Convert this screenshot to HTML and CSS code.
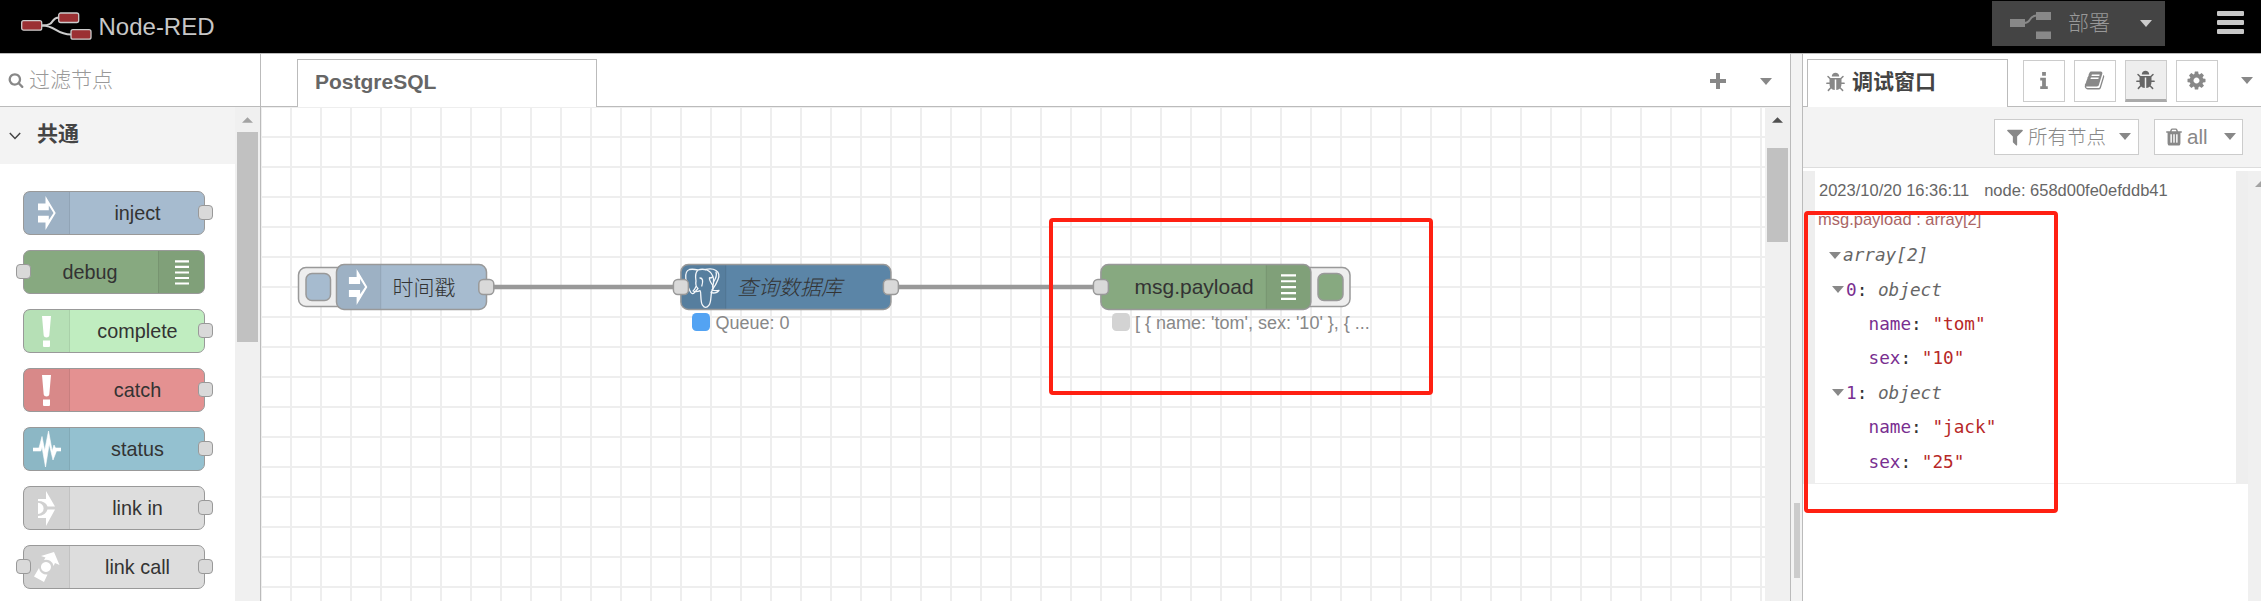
FILE: index.html
```
<!DOCTYPE html>
<html lang="zh-CN">
<head>
<meta charset="utf-8">
<title>Node-RED</title>
<link rel="stylesheet" href="styles.css">
</head>
<body>
<svg class="defs" width="0" height="0">
  <symbol id="i-bug" viewBox="0 0 1792 1792"><path d="M1696 960q0 26-19 45t-45 19h-224q0 171-67 290l208 209q19 19 19 45t-19 45q-18 19-45 19t-45-19l-198-197q-5 5-15 13t-42 28.500-65 36.500-82 29-97 13v-896h-128v896q-51 0-101.500-13.500t-87-33-66-39-43.500-32.500l-15-14-183 207q-20 21-48 21-24 0-43-16-19-18-20.500-44.500t15.500-46.500l202-227q-58-114-58-274h-224q-26 0-45-19t-19-45 19-45 45-19h224v-294l-173-173q-19-19-19-45t19-45 45-19 45 19l173 173h844l173-173q19-19 45-19t45 19 19 45-19 45l-173 173v294h224q26 0 45 19t19 45zm-480-576h-640q0-133 93.500-226.500t226.500-93.500 226.500 93.500 93.500 226.500z"/></symbol>
  <symbol id="i-cog" viewBox="0 0 1792 1792"><path d="M1152 896q0-106-75-181t-181-75-181 75-75 181 75 181 181 75 181-75 75-181zm512-109v222q0 12-8 23t-20 13l-185 28q-19 54-39 91 35 50 107 138 10 12 10 25t-9 23q-27 37-99 108t-94 71q-12 0-26-9l-138-108q-44 23-91 38-16 136-29 186-7 28-36 28h-222q-14 0-24.500-8.500t-11.500-21.500l-28-184q-49-16-90-37l-141 107q-10 9-25 9-14 0-25-11-126-114-165-168-7-10-7-23 0-12 8-23 15-21 51-66.500t54-70.500q-27-50-41-99l-183-27q-13-2-21-12.500t-8-23.500v-222q0-12 8-23t19-13l186-28q14-46 39-92-40-57-107-138-10-12-10-24 0-10 9-23 26-36 98.500-107.500t94.500-71.500q13 0 26 10l138 107q44-23 91-38 16-136 29-186 7-28 36-28h222q14 0 24.500 8.500t11.500 21.500l28 184q49 16 90 37l142-107q9-9 24-9 13 0 25 10 129 119 165 170 7 8 7 22 0 12-8 23-15 21-51 66.500t-54 70.500q26 50 41 98l183 28q13 2 21 12.500t8 23.500z"/></symbol>
  <symbol id="i-search" viewBox="0 0 1792 1792"><path d="M1216 832q0-185-131.500-316.500t-316.500-131.500-316.500 131.500-131.500 316.500 131.500 316.500 316.500 131.500 316.500-131.500 131.500-316.500zm512 832q0 52-38 90t-90 38q-54 0-90-38l-343-342q-179 124-399 124-143 0-273.500-55.500t-225-150-150-225-55.500-273.500 55.500-273.500 150-225 225-150 273.500-55.500 273.500 55.500 225 150 150 225 55.500 273.500q0 220-124 399l343 343q37 37 37 90z"/></symbol>
  <symbol id="i-trash" viewBox="0 0 1792 1792"><path d="M704 1376v-704q0-14-9-23t-23-9h-64q-14 0-23 9t-9 23v704q0 14 9 23t23 9h64q14 0 23-9t9-23zm256 0v-704q0-14-9-23t-23-9h-64q-14 0-23 9t-9 23v704q0 14 9 23t23 9h64q14 0 23-9t9-23zm256 0v-704q0-14-9-23t-23-9h-64q-14 0-23 9t-9 23v704q0 14 9 23t23 9h64q14 0 23-9t9-23zm-544-992h448l-48-117q-7-9-17-11h-317q-10 2-17 11zm928 32v64q0 14-9 23t-23 9h-96v948q0 83-47 143.500t-113 60.500h-832q-66 0-113-58.500t-47-141.500v-952h-96q-14 0-23-9t-9-23v-64q0-14 9-23t23-9h309l70-167q15-37 54-63t79-26h320q40 0 79 26t54 63l70 167h309q14 0 23 9t9 23z"/></symbol>
  <symbol id="i-filter" viewBox="0 0 1792 1792"><path d="M1595 295q17 41-14 70l-493 493v742q0 42-39 59-13 5-25 5-27 0-45-19l-256-256q-19-19-19-45v-486l-493-493q-31-29-14-70 17-39 59-39h1280q42 0 59 39z"/></symbol>
  <symbol id="i-book" viewBox="0 0 1792 1792"><path d="M1703 478q40 57 18 129l-275 906q-19 64-76.500 107.500t-122.500 43.500h-923q-77 0-148.500-53.500t-99.500-131.500q-24-67-2-127 0-4 3-27t4-37q1-8-3-21.500t-3-19.500q2-11 8-21t16.500-23.500 16.500-23.500q23-38 45-91.500t30-91.500q3-10 .5-30t-.5-28q3-11 17-28t17-23q21-36 42-92t25-90q1-9-2.500-32t.5-28q4-13 22-30.500t22-22.500q19-26 42.500-84.500t27.500-96.500q1-8-3-25.500t-2-26.500q2-8 9-18t18-23 17-21q8-12 16.500-30.500t15-35 16-36 19.500-32 26.500-23.500 36-11.500 47.500 5.500l-1 3q38-9 51-9h761q74 0 114 56t18 130l-274 906q-36 119-71.500 153.500t-128.500 34.500h-869q-27 0-38 15-11 16-1 43 24 70 144 70h923q29 0 56-15.500t35-41.500l300-987q7-22 5-57 38 15 59 43zm-1064 2q-4 13 2 22.500t20 9.500h608q13 0 25.500-9.500t16.500-22.500l21-64q4-13-2-22.500t-20-9.500h-608q-13 0-25.500 9.500t-16.500 22.500zm-83 256q-4 13 2 22.500t20 9.500h608q13 0 25.500-9.500t16.500-22.500l21-64q4-13-2-22.500t-20-9.500h-608q-13 0-25.500 9.500t-16.500 22.500z"/></symbol>
  <symbol id="i-info" viewBox="0 0 8 18"><path d="M2 0h4v4H2zM0 6h6v9h2v3H0v-3h2V9H0z"/></symbol>
  <symbol id="i-caret" viewBox="0 0 12 7"><path d="M0 0h12L6 7z"/></symbol>
  <symbol id="i-up" viewBox="0 0 12 6"><path d="M0 6h12L6 0z"/></symbol>
  <symbol id="i-inject" viewBox="0 0 18 34"><path d="M0 7.500H7.500V0L17.700 17 7.500 34V26.500H0V19.800H10.800V24L15.500 17 10.800 9.500V14.200H0z"/></symbol>
  <symbol id="i-bang" viewBox="0 0 9 31"><path d="M0 0h9L7.300 19.500Q7 21.500 4.500 21.500T1.700 19.500zM1 24.500h7v5.500q0 1-1 1H2q-1 0-1-1z"/></symbol>
  <symbol id="i-list" viewBox="0 0 15 26"><path d="M0 0h15v2.200H0zM0 5.900h15v2.200H0zM0 11.800h15V14H0zM0 17.700h15v2.200H0zM0 23.600h15v2.200H0z"/></symbol>
  <symbol id="i-status" viewBox="0 0 28 36"><path d="M0 17h6l3-11.500 2.700 14L15.500 0l3.700 20 1.800-6 1.500 3H28v3h-4.500L20 29l-3.800-16L12.500 36 9 16l-1.200 4H0z" stroke="#fff" stroke-width=".6"/></symbol>
  <symbol id="i-linkin" viewBox="0 0 18 35"><path d="M0 8h8V0l9 15.500H9.500Q7.500 10 0 10zM0 11.800a5.600 5.600 0 0 1 0 11.200zM0 25Q7.500 25 9.500 18.500H17L8 35v-8H0z"/></symbol>
  <symbol id="i-linkcall" viewBox="0 0 26 30"><path d="M7 4 20 0l5.500 13-4.500-2-1.500 3A7.500 7.500 0 0 0 10 8l1.500-2.500zM12 10a5 5 0 1 1-.1 0zM5 16A7.500 7.500 0 0 0 13.500 22.500L10 30 0 24.500z"/></symbol>
</svg>

<header class="header">
  <svg class="logo" width="72" height="30" viewBox="0 0 72 30">
    <g fill="none" stroke="#ccc" stroke-width="2"><path d="M21 14.500c14 0 8-8 17-8"/><path d="M21 14.500c14 0 14 9 29 9"/></g>
    <g fill="#9b3033" stroke="#ccc" stroke-width="1.300"><rect x=".7" y="9.700" width="20" height="9.500" rx="2"/><rect x="37.700" y="2" width="20" height="9.500" rx="2"/><rect x="50" y="18.700" width="20" height="9.500" rx="2"/></g>
  </svg>
  <span class="brand">Node-RED</span>
  <div class="deploy">
    <svg width="42" height="28" viewBox="0 0 42 28"><path d="M0 8h15v8H0zM26 1h15v8H26zM26 20.500h15v8H26z" fill="#888"/><path d="M14 12q4 0 6-3.500t6-4" stroke="#888" stroke-width="2" fill="none"/></svg>
    <span class="deploy-text">部署</span>
    <svg class="caret deploy-caret"><use href="#i-caret"/></svg>
  </div>
  <div class="burger"><i></i><i></i><i></i></div>
</header>

<div class="main">
  <aside class="palette">
    <div class="search"><svg width="16" height="16"><use href="#i-search"/></svg><span>过滤节点</span></div>
    <div class="palette-body">
      <div class="palette-list">
        <div class="category"><svg width="12" height="8" viewBox="0 0 12 8"><path d="M.8 1 6 6.500 11.200 1" fill="none" stroke="#444" stroke-width="1.500"/></svg><b>共通</b></div>
        <div class="nodes">
          <div class="pnode inject"><span class="pic"><svg width="18" height="34"><use href="#i-inject"/></svg></span><span class="lbl">inject</span><i class="port out"></i></div>
          <div class="pnode debug"><i class="port in"></i><span class="lbl">debug</span><span class="pic"><svg width="14" height="25"><use href="#i-list"/></svg></span></div>
          <div class="pnode complete"><span class="pic"><svg width="9" height="31"><use href="#i-bang"/></svg></span><span class="lbl">complete</span><i class="port out"></i></div>
          <div class="pnode catch"><span class="pic"><svg width="9" height="31"><use href="#i-bang"/></svg></span><span class="lbl">catch</span><i class="port out"></i></div>
          <div class="pnode status"><span class="pic"><svg width="28" height="36"><use href="#i-status"/></svg></span><span class="lbl">status</span><i class="port out"></i></div>
          <div class="pnode link"><span class="pic"><svg width="18" height="35"><use href="#i-linkin"/></svg></span><span class="lbl">link in</span><i class="port out"></i></div>
          <div class="pnode link"><i class="port in"></i><span class="pic"><svg width="26" height="30"><use href="#i-linkcall"/></svg></span><span class="lbl">link call</span><i class="port out"></i></div>
        </div>
      </div>
      <div class="scroll pscroll"><svg class="up"><use href="#i-up"/></svg><i></i></div>
    </div>
  </aside>

  <section class="workspace">
    <div class="tabs">
      <div class="tab flow-tab">PostgreSQL</div>
      <svg class="plus" width="16" height="16" viewBox="0 0 16 16"><path d="M6 0h4v6h6v4h-6v6H6v-6H0V6h6z"/></svg>
      <svg class="caret ws-caret"><use href="#i-caret"/></svg>
    </div>
    <div class="ws-body">
      <svg class="canvas" width="1504" height="494" viewBox="261 107 1504 494">
        <g stroke="#999" stroke-width="4.500"><path d="M487 287H681M891 287H1101"/></g>
        <g stroke="#999" stroke-width="1.500">
          <rect x="298.500" y="267.500" width="48" height="39" rx="7.500" fill="#eee"/>
          <rect x="306" y="273.500" width="24.500" height="27" rx="6" fill="#a6bbcf"/>
          <rect x="336.500" y="264.500" width="150" height="45" rx="7.500" fill="#a6bbcf"/>
          <rect x="680.900" y="264.500" width="210" height="45" rx="7.500" fill="#5b85a7"/>
          <rect x="1302" y="267.500" width="48" height="39" rx="7.500" fill="#eee"/>
          <rect x="1318" y="273.500" width="25" height="27" rx="6" fill="#87a980"/>
          <rect x="1100.900" y="264.500" width="210" height="45" rx="7.500" fill="#87a980"/>
        </g>
        <g fill="#000" fill-opacity=".05">
          <path d="M381 265.200H344q-6.700 0-6.700 6.700v30.200q0 6.700 6.700 6.700h37zM726 265.200h-37.600q-6.700 0-6.700 6.700v30.200q0 6.700 6.700 6.700H726zM1266 265.200h37.500q6.700 0 6.700 6.700v30.200q0 6.700-6.700 6.700H1266z"/>
          <path d="M380 265.200h1.500v43.600H380zM725 265.200h1.500v43.600H725zM1265.500 265.200h1.500v43.600h-1.500z"/>
        </g>
        <g fill="#fff">
          <use href="#i-inject" x="348.700" y="268.700" width="19" height="36.500"/>
          <use href="#i-list" x="1281" y="274" width="15" height="26.500"/>
        </g>
        <g transform="translate(685 268)" fill="none" stroke="#f4f7fa" stroke-width="1.300" stroke-linejoin="round" stroke-linecap="round">
          <path d="M13 2Q8 .8 4.500 1.500 0 3 .8 10.500 1.800 18 5.500 24q1.800 3 4 .5l3.500-4Q10 18 11 13 9.500 5 13 2q4-1.500 9 0 5.500 2.500 6.500 9 .5 4-1 8"/>
          <path d="M20.500 1.500Q27 0 31 2.500q4.500 3 2 9-2 5.500-6 10.500 3 1 7 .3-1.500 2.500-6 2.700-1.500 0-2-.8"/>
          <path d="M11 18.500q-1.500 3.500-3 4.500 3.500 1.500 7-.3 1 1.500.8 5 .3 7.500 1.700 9.500 3 4.500 6.500 0 1.500-2 2-8.500l.5-5Q29 21 27.500 17 24 12 24.500 10"/>
          <path d="M15 10q2 0 2.500 2t-.7 6M24.500 10q2 0 3-1M31 4q1.500 4-2.500 10"/>
        </g>
        <g fill="#d9d9d9" stroke="#999" stroke-width="1.500">
          <rect x="478.800" y="279.500" width="15" height="15" rx="4.500"/><rect x="673.400" y="279.500" width="15" height="15" rx="4.500"/>
          <rect x="883.400" y="279.500" width="15" height="15" rx="4.500"/><rect x="1093.400" y="279.500" width="15" height="15" rx="4.500"/>
        </g>
        <rect x="692" y="313" width="18" height="18" rx="4.500" fill="#53a3f3"/>
        <rect x="1112" y="313" width="18" height="18" rx="4.500" fill="#d3d3d3"/>
        <g class="node-text">
          <text x="392.500" y="294.500">时间戳</text>
          <text x="737" y="294.500" font-style="italic">查询数据库</text>
          <text x="1134.500" y="293.700">msg.payload</text>
        </g>
        <g class="status-text">
          <text x="715.500" y="329">Queue: 0</text>
          <text x="1135" y="329" xml:space="preserve">[ { name: 'tom', sex: '10' }, { ...</text>
        </g>
      </svg>
      <div class="scroll wscroll"><svg class="up"><use href="#i-up"/></svg><i></i></div>
    </div>
  </section>

  <div class="separator"><i></i></div>

  <aside class="sidebar">
    <div class="tabs">
      <div class="tab side-tab"><svg width="21" height="21"><use href="#i-bug"/></svg><b>调试窗口</b></div>
      <div class="side-buttons">
        <span class="sbtn"><svg width="8" height="17"><use href="#i-info"/></svg></span>
        <span class="sbtn"><svg width="21" height="21"><use href="#i-book"/></svg></span>
        <span class="sbtn active"><svg width="21" height="21"><use href="#i-bug"/></svg></span>
        <span class="sbtn"><svg width="21" height="21"><use href="#i-cog"/></svg></span>
      </div>
      <svg class="caret side-caret"><use href="#i-caret"/></svg>
    </div>
    <div class="toolbar">
      <span class="tbtn all-nodes"><svg width="20" height="20"><use href="#i-filter"/></svg><span>所有节点</span><svg class="caret"><use href="#i-caret"/></svg></span>
      <span class="tbtn clear"><svg width="20" height="20"><use href="#i-trash"/></svg><span>all</span><svg class="caret"><use href="#i-caret"/></svg></span>
    </div>
    <div class="debug-wrap">
      <div class="debug-list">
        <div class="msg">
          <div class="meta"><span>2023/10/20 16:36:11</span><span>node: 658d00fe0efddb41</span></div>
          <div class="topic">msg.payload : array[2]</div>
          <div class="row r0"><svg class="caret"><use href="#i-caret"/></svg><em>array[2]</em></div>
          <div class="row r1"><svg class="caret"><use href="#i-caret"/></svg><span><b>0</b>: <em>object</em></span></div>
          <div class="row r2"><span><b>name</b>: <q>"tom"</q></span></div>
          <div class="row r2"><span><b>sex</b>: <q>"10"</q></span></div>
          <div class="row r1"><svg class="caret"><use href="#i-caret"/></svg><span><b>1</b>: <em>object</em></span></div>
          <div class="row r2"><span><b>name</b>: <q>"jack"</q></span></div>
          <div class="row r2"><span><b>sex</b>: <q>"25"</q></span></div>
        </div>
      </div>
      <div class="side-scroll"><svg class="up"><use href="#i-up"/></svg></div>
    </div>
  </aside>
</div>

<div class="mark mark-node"></div>
<div class="mark mark-debug"></div>
</body>
</html>
```
FILE: styles.css
```
* { box-sizing: border-box; }
body {
  margin: 0;
  width: 2261px;
  height: 601px;
  overflow: hidden;
  position: relative;
  display: flex;
  flex-direction: column;
  background: #fff;
  font-family: "Liberation Sans", "Noto Sans CJK SC", sans-serif;
  color: #888;
}
svg { display: block; flex: none; fill: currentColor; }
.defs { position: absolute; }
i { display: block; }
.caret { width: 12px; height: 7px; }

.header {
  height: 54px;
  flex: none;
  display: flex;
  background: #000;
  border-bottom: 1px solid #bbb;
  padding-left: 21px;
}
.logo { margin-top: 11px; }
.brand { margin-left: 5.500px; font-size: 24px; line-height: 53px; color: #c7c7c7; }
.deploy {
  margin: 1px 0 0 auto;
  width: 173px;
  height: 45px;
  display: flex;
  align-items: flex-start;
  padding-left: 18px;
  background: #444;
  color: #999;
}
.deploy > svg:first-child { margin-top: 10px; }
.deploy-text { margin-left: 16px; font-size: 21px; line-height: 44px; font-weight: 300; }
.deploy-caret { margin: 19px 0 0 30px; color: #ccc; }
.burger { width: 27px; margin: 11px 17px 0 52px; display: flex; flex-direction: column; gap: 4.500px; }
.burger i { height: 4.500px; background: #c7c7c7; border-radius: 1px; }

.main { flex: 1; display: flex; min-height: 0; }

.palette { width: 261px; border-right: 1px solid #bbb; display: flex; flex-direction: column; }
.search {
  height: 53px;
  flex: none;
  border-bottom: 1px solid #bbb;
  display: flex;
  align-items: center;
  padding-left: 8px;
}
.search span { margin-left: 5px; font-size: 21px; font-weight: 300; color: #999; line-height: 50px; }
.palette-body { flex: 1; display: flex; min-height: 0; }
.palette-list { width: 235px; overflow: hidden; }
.category { height: 57px; background: #f3f3f3; display: flex; align-items: center; padding-left: 9px; }
.category b { margin-left: 16px; font-size: 21px; line-height: 54px; height: 57px; color: #444; }
.nodes { padding: 27px 0 0 23px; display: flex; flex-direction: column; gap: 15px; }
.pnode {
  position: relative;
  width: 182px;
  height: 44px;
  flex: none;
  border: 1px solid #999;
  border-radius: 7px;
  display: flex;
}
.pic { width: 46px; background: rgba(0, 0, 0, .05); color: #fff; display: flex; align-items: center; justify-content: center; border-right: 1px solid rgba(0, 0, 0, .07); }
.debug .pic { border-right: 0; border-left: 1px solid rgba(0, 0, 0, .07); }
.lbl { flex: 1; text-align: center; padding-left: 1px; font-size: 19.800px; line-height: 43px; color: #333; }
.debug .lbl { padding-right: 3px; }
.inject { background: #a6bbcf; }
.debug { background: #87a980; }
.complete { background: #c0edc0; }
.catch { background: #e49191; }
.status { background: #94c1d0; }
.link { background: #ddd; }
.port { position: absolute; top: 13px; width: 15px; height: 15px; border: 1px solid #999; border-radius: 4px; background: #d9d9d9; }
.out { right: -9px; }
.in { left: -8px; }

.scroll { background: #f0f0f0; width: 25px; flex: none; display: flex; flex-direction: column; align-items: center; }
.scroll .up { width: 11px; height: 6px; margin-top: 10px; color: #a3a3a3; }
.scroll i { width: 21px; background: #c1c1c1; }
.pscroll i { height: 210px; margin-top: 9px; }
.wscroll .up { color: #505050; }
.wscroll i { height: 94px; margin-top: 25px; }

.workspace { width: 1530px; border-right: 1px solid #bbb; display: flex; flex-direction: column; }
.tabs { height: 53px; flex: none; display: flex; border-bottom: 1px solid #bbb; }
.tab { margin-top: 5px; height: 48px; border: 1px solid #bbb; border-bottom: 0; background: #fff; }
.flow-tab { margin-left: 36px; width: 300px; padding-left: 17px; font-size: 21px; font-weight: bold; line-height: 44px; color: #666; }
.plus { margin: 19px 0 0 auto; }
.ws-caret { margin: 24px 18px 0 34px; }
.ws-body { flex: 1; display: flex; min-height: 0; }
.canvas {
  background-color: #fff;
  background-image: linear-gradient(90deg, #eee 2px, transparent 2px), linear-gradient(#eee 2px, transparent 2px);
  background-size: 30px 30px;
  background-position: 29px 29px;
}
.node-text { font-size: 21px; font-weight: 300; fill: #333; }
.status-text { font-size: 18px; fill: #888; }

.separator { width: 11px; background: #f3f3f3; padding: 449px 0 0 3px; }
.separator i { width: 6px; height: 75px; background: #ccc; }

.sidebar { flex: 1; border-left: 1px solid #bbb; display: flex; flex-direction: column; min-width: 0; }
.side-tab { margin-left: 4px; width: 201px; flex: none; display: flex; align-items: center; padding: 0 0 3px 17px; }
.side-tab b { margin-left: 6px; font-size: 21px; line-height: 40px; color: #444; }
.side-buttons { margin: 6px 0 0 15px; display: flex; gap: 9px; }
.sbtn { width: 42px; height: 42px; border: 1px solid #ccc; display: flex; align-items: center; justify-content: center; padding: 0 1px 2px 0; }
.active { background: #eee; border-bottom: 3px solid #aaa; color: #666; padding-bottom: 0; }
.side-caret { margin: 23px 0 0 23px; }
.toolbar { height: 61px; flex: none; background: #f3f3f3; border-bottom: 1px solid #ddd; display: flex; justify-content: flex-end; gap: 15px; padding: 12px 18px 0 0; }
.tbtn { height: 36px; border: 1px solid #ccc; background: #fff; display: flex; align-items: center; padding-bottom: 1px; }
.tbtn span { font-size: 19.500px; line-height: 32px; font-weight: 300; }
.all-nodes { width: 145px; padding-left: 10px; }
.all-nodes span { margin: 0 13px 0 3px; }
.clear { width: 89px; padding-left: 9px; }
.clear span { margin: 0 16px 0 3px; font-size: 20.500px; font-weight: 400; }

.debug-wrap { flex: 1; padding-top: 3px; display: flex; min-height: 0; }
.debug-list { width: 445px; flex: none; }
.msg { height: 313px; border: solid #eee; border-width: 0 12px 1px; padding-top: 6px; color: #333; }
.meta { display: flex; gap: 15px; padding-left: 4px; font-size: 16.500px; line-height: 27px; color: #666; }
.topic { padding-left: 3px; font-size: 16.500px; line-height: 30px; color: #a66; }
.row { display: flex; align-items: center; height: 34.400px; font-family: "DejaVu Sans Mono", monospace; font-size: 17.700px; line-height: 34px; white-space: pre; }
.row .caret { color: #888; width: 12px; }
.r0 { margin-top: 4px; padding-left: 14px; }
.r0 em { margin-left: 2px; }
.r1 { padding-left: 17px; }
.r1 span { margin-left: 2px; }
.r2 { padding-left: 53.500px; }
.row b { font-weight: 400; color: #792e90; }
.row em { color: #666; }
.row q { quotes: none; color: #b72828; }
.side-scroll { flex: 1; background: #f0f0f0; overflow: hidden; }
.side-scroll .up { width: 12px; height: 6px; margin: 10px 0 0 7px; color: #a3a3a3; }

.mark { position: absolute; border: 4px solid #ff2012; border-radius: 4px; }
.mark-node { left: 1049px; top: 218px; width: 384px; height: 177px; }
.mark-debug { left: 1804px; top: 211px; width: 254px; height: 302px; }
```
